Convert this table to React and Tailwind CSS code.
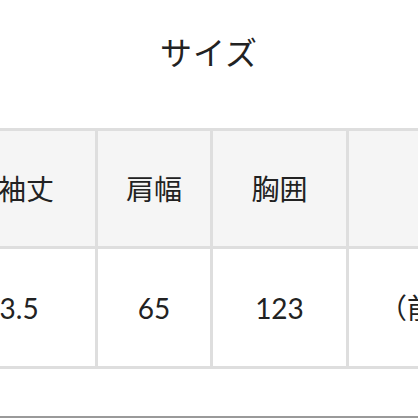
export default function App() {
  const font = { fontFamily: 'Lato, "Noto Sans CJK JP", sans-serif' };
  return (
    <div className="w-[418px] h-[418px] overflow-hidden bg-white text-[#222]" style={font}>
      <div className="h-[128px] pt-[37px] text-center text-[32px] leading-[32px] tracking-[1px]">サイズ</div>
      <div className="ml-[-43px] w-[600px] border-t-[3px] border-[#dedede]">
        <div className="flex h-[118px] bg-[#f5f5f5] border-b-[3px] border-[#dedede] text-[28px]">
          <div className="w-[141px] border-r-[3px] border-[#dedede] flex items-center justify-center">袖丈</div>
          <div className="w-[115px] border-r-[3px] border-[#dedede] flex items-center justify-center">肩幅</div>
          <div className="w-[136px] border-r-[3px] border-[#dedede] flex items-center justify-center">胸囲</div>
          <div className="w-[200px] flex items-center justify-center"></div>
        </div>
        <div className="flex h-[120px] bg-white border-b-[3px] border-[#dedede] text-[28px]">
          <div className="w-[141px] border-r-[3px] border-[#dedede] flex items-center justify-center pr-[30px]">63.5</div>
          <div className="w-[115px] border-r-[3px] border-[#dedede] flex items-center justify-center">65</div>
          <div className="w-[136px] border-r-[3px] border-[#dedede] flex items-center justify-center">123</div>
          <div className="w-[200px] flex items-center pl-[30px] whitespace-nowrap">（前後</div>
        </div>
      </div>
      <div className="mt-[47px] h-[2px] bg-[#9a9a9a]"></div>
    </div>
  );
}
